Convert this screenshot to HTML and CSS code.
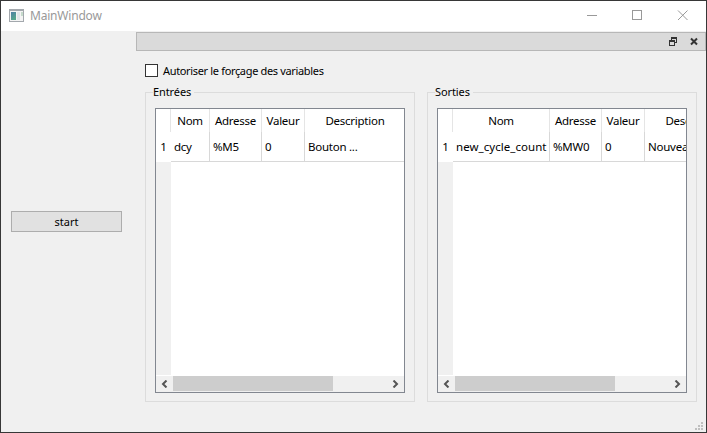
FILE: index.html
```html
<!DOCTYPE html>
<html lang="fr">
<head>
<meta charset="utf-8">
<title>MainWindow</title>
<link rel="stylesheet" href="styles.css">
</head>
<body>
<div class="window">
  <header class="titlebar">
    <svg class="app-icon" width="15" height="13" shape-rendering="crispEdges"><defs><linearGradient id="g" x1="0" y1="0" x2="0.5" y2="1"><stop offset="0" stop-color="#4f7fa5"/><stop offset="1" stop-color="#57a78b"/></linearGradient></defs><path fill="#a3a8ad" d="M0 0h15v13H0z"/><path fill="#f4f4f4" d="M1 2h13v10H1z"/><path fill="url(#g)" d="M2 3h5v8H2z"/><path fill="#e2e6e8" d="M8 3h3v8H8z"/><path fill="#c5dacb" d="M12 3h2v4h-2z"/></svg>
    <span class="title">MainWindow</span>
    <svg class="controls" width="103" height="12" fill="none" stroke="#999"><path shape-rendering="crispEdges" d="M0 5.500h10M45.500 .5h9v9h-9z"/><path d="M91 .5l9.500 9.500M100.500 .5L91 10"/></svg>
  </header>
  <main class="body">
    <aside class="side"><button class="start">start</button></aside>
    <section class="dock">
      <div class="dock-title">
        <svg width="30" height="9"><g fill="none" stroke="#333" shape-rendering="crispEdges"><path d="M2.500 3V.5h5v5H6M.5 3.500h5v5h-5z"/><path d="M2 1.500h6M0 4.500h6"/></g><path d="M22 1.500l6 6M28 1.500l-6 6" stroke="#333" stroke-width="2"/></svg>
      </div>
      <label class="check"><i class="box"></i><span>Autoriser le forçage des variables</span></label>
      <div class="groups">
        <fieldset class="group">
          <legend>Entrées</legend>
          <div class="table">
            <div class="grid inputs">
              <b></b><b>Nom</b><b>Adresse</b><b>Valeur</b><b>Description</b>
              <em>1</em><span>dcy</span><span>%M5</span><span>0</span><span>Bouton ...</span>
            </div>
            <div class="gutter"></div>
            <div class="scroll"><svg width="7" height="8"><path d="M5.500 .5L2 4l3.500 3.500" fill="none" stroke="#555" stroke-width="2"/></svg><i class="thumb"></i><svg width="7" height="8"><path d="M1.500 .5L5 4 1.500 7.500" fill="none" stroke="#555" stroke-width="2"/></svg></div>
          </div>
        </fieldset>
        <fieldset class="group">
          <legend>Sorties</legend>
          <div class="table">
            <div class="grid outputs">
              <b></b><b>Nom</b><b>Adresse</b><b>Valeur</b><b>Description</b>
              <em>1</em><span class="long">new_cycle_count</span><span>%MW0</span><span>0</span><span>Nouveau ...</span>
            </div>
            <div class="gutter"></div>
            <div class="scroll"><svg width="7" height="8"><path d="M5.500 .5L2 4l3.500 3.500" fill="none" stroke="#555" stroke-width="2"/></svg><i class="thumb"></i><svg width="7" height="8"><path d="M1.500 .5L5 4 1.500 7.500" fill="none" stroke="#555" stroke-width="2"/></svg></div>
          </div>
        </fieldset>
      </div>
      <svg class="grip" width="8" height="8" fill="#bfbfbf" shape-rendering="crispEdges"><path d="M6 0h2v2H6zM3 3h2v2H3zM6 3h2v2H6zM0 6h2v2H0zM3 6h2v2H3zM6 6h2v2H6z"/></svg>
    </section>
  </main>
</div>
</body>
</html>
```
FILE: styles.css
```css
* { box-sizing: border-box; }
body { margin: 0; font: 11px/14px "Noto Sans", sans-serif; color: #000; }
.window { width: 707px; height: 433px; border: 1px solid #373737; background: #f0f0f0; display: flex; flex-direction: column; overflow: hidden; }
.titlebar { height: 30px; flex: none; background: #fff; display: flex; align-items: center; padding: 0 16px 0 8px; }
.app-icon { margin-top: -2px; }
.title { margin-left: 6px; font-size: 12px; letter-spacing: -0.2px; color: #999; flex: 1; }
.controls { margin-top: -1px; }
.body { flex: 1; display: flex; }
.side { width: 135px; padding: 180px 0 0 10px; }
.start { display: block; width: 111px; height: 21px; padding: 0; border: 1px solid #adadad; background: #e1e1e1; font: inherit; line-height: 19px; color: #000; }
.dock { width: 570px; padding-top: 1px; position: relative; }
.dock-title { height: 19px; border: 1px solid #b7b7b7; background: #dadada; display: flex; justify-content: flex-end; align-items: center; padding-right: 6px; }
.check { display: flex; align-items: center; height: 13px; margin: 13px 0 0 9px; letter-spacing: -0.34px; }
.box { width: 13px; height: 13px; border: 1px solid #333; background: #fff; margin-right: 5px; }
.groups { display: flex; gap: 12px; margin: 8px 0 0 9px; }
.group { width: 270px; height: 317px; margin: 0; padding: 0 9px 9px; border: 1px solid #dcdcdc; min-width: 0; }
.group legend { padding: 0 3px 0 0; margin-left: -2px; height: 14px; line-height: 14px; letter-spacing: -0.1px; }
.table { height: 285px; margin-top: 9px; border: 1px solid #828790; background: #fff; display: flex; flex-direction: column; overflow: hidden; }
.grid { display: grid; grid-template-rows: 23px 30px; flex: none; white-space: nowrap; font-size: 11.5px; letter-spacing: -0.25px; }
.inputs { grid-template-columns: 15px 39px 52px 43px 100px; }
.outputs { grid-template-columns: 15px 97px 52px 43px 100px; }
.grid b { font-weight: 400; text-align: center; line-height: 23px; border-right: 1px solid #e5e5e5; }
.grid span { padding-left: 3px; line-height: 29px; border-right: 1px solid #d8d8d8; border-bottom: 1px solid #d8d8d8; }
.grid .long { letter-spacing: 0.05px; }
.grid b:nth-child(5), .grid span:last-child { border-right: 0; }
.grid em { font-style: normal; text-align: center; line-height: 30px; }
.gutter { flex: 1; width: 15px; background: #f0f0f0; margin-bottom: 1px; }
.scroll { height: 16px; flex: none; background: #f0f0f0; display: flex; align-items: center; padding: 0 5px; }
.scroll svg:last-child { margin-left: auto; }
.thumb { width: 160px; height: 15px; background: #cdcdcd; align-self: flex-start; margin-left: 5px; }
.grip { position: absolute; right: 3px; bottom: 2px; }
```
